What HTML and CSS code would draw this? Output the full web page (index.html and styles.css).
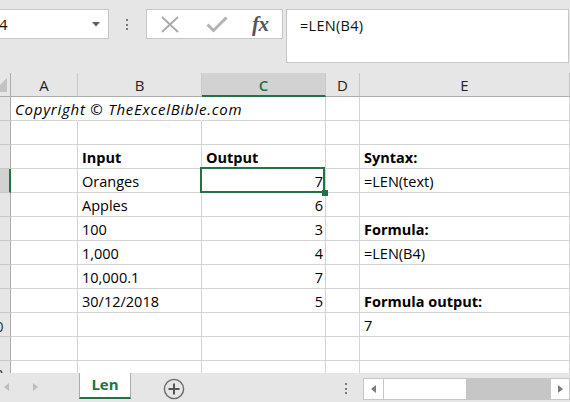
FILE: index.html
```html
<!DOCTYPE html>
<html>
<head>
<meta charset="utf-8">
<link rel="stylesheet" href="styles.css">
</head>
<body>
<div class="app">
  <div class="toolbar">
    <div class="namebox">
      <span class="nb-text">4</span>
      <svg class="nb-arrow" width="8" height="5" viewBox="0 0 8 5"><polygon points="0,0 8,0 4,4.5" fill="#5f5f5f"/></svg>
    </div>
    <div class="vdots"><i></i><i></i><i></i></div>
    <div class="fxbox">
      <svg class="ic-x" width="18" height="17" viewBox="0 0 18 17"><path d="M1 1 L17 16 M17 1 L1 16" stroke="#a8a8a8" stroke-width="1.8" fill="none"/></svg>
      <svg class="ic-check" width="22" height="17" viewBox="0 0 22 17"><path d="M1.5 8.5 L7.5 14.5 L20.5 1.5" stroke="#b3b3b3" stroke-width="3" fill="none"/></svg>
      <span class="fx">fx</span>
    </div>
    <div class="formula">=LEN(B4)</div>
  </div>

  <div class="grid">
    <div class="corner"><svg width="10" height="23" viewBox="0 0 10 23"><polygon points="7,5 7,19 -7,19" fill="#c3c3c3"/></svg></div>
    <div class="ch">A</div>
    <div class="ch">B</div>
    <div class="ch ch-sel">C</div>
    <div class="ch">D</div>
    <div class="ch">E</div>

    <div class="rh"></div>
    <div class="c nob it">Copyright © TheExcelBible.com</div>
    <div class="c nob"></div>
    <div class="c"></div>
    <div class="c"></div>
    <div class="c"></div>

    <div class="rh"></div>
    <div class="c"></div><div class="c"></div><div class="c"></div><div class="c"></div><div class="c"></div>

    <div class="rh"></div>
    <div class="c"></div>
    <div class="c b">Input</div>
    <div class="c b">Output</div>
    <div class="c"></div>
    <div class="c b">Syntax:</div>

    <div class="rh rh-sel"></div>
    <div class="c"></div>
    <div class="c">Oranges</div>
    <div class="c num active">7<div class="selbox"></div><div class="handle"></div></div>
    <div class="c"></div>
    <div class="c">=LEN(text)</div>

    <div class="rh"></div>
    <div class="c"></div>
    <div class="c">Apples</div>
    <div class="c num">6</div>
    <div class="c"></div>
    <div class="c"></div>

    <div class="rh"></div>
    <div class="c"></div>
    <div class="c">100</div>
    <div class="c num">3</div>
    <div class="c"></div>
    <div class="c b">Formula:</div>

    <div class="rh"></div>
    <div class="c"></div>
    <div class="c">1,000</div>
    <div class="c num">4</div>
    <div class="c"></div>
    <div class="c">=LEN(B4)</div>

    <div class="rh"></div>
    <div class="c"></div>
    <div class="c">10,000.1</div>
    <div class="c num">7</div>
    <div class="c"></div>
    <div class="c"></div>

    <div class="rh"></div>
    <div class="c"></div>
    <div class="c">30/12/2018</div>
    <div class="c num">5</div>
    <div class="c"></div>
    <div class="c b">Formula output:</div>

    <div class="rh"><span>10</span></div>
    <div class="c"></div><div class="c"></div><div class="c"></div><div class="c"></div>
    <div class="c">7</div>

    <div class="rh"></div>
    <div class="c"></div><div class="c"></div><div class="c"></div><div class="c"></div><div class="c"></div>

    <div class="rh last"><span>12</span></div>
    <div class="c last"></div><div class="c last"></div><div class="c last"></div><div class="c last"></div><div class="c last"></div>
  </div>

  <div class="tabbar">
    <div class="tabnav">
      <svg class="nav-l" width="5" height="8" viewBox="0 0 5 8"><polygon points="5,0 5,8 0,4" fill="#bdbdbd"/></svg>
      <svg class="nav-r" width="5" height="8" viewBox="0 0 5 8"><polygon points="0,0 0,8 5,4" fill="#bdbdbd"/></svg>
    </div>
    <div class="tab">Len</div>
    <svg class="addsheet" width="22" height="22" viewBox="0 0 22 22"><circle cx="11" cy="11" r="9.6" stroke="#6a6a6a" stroke-width="1.4" fill="none"/><path d="M11 5.5 V16.5 M5.5 11 H16.5" stroke="#555" stroke-width="2" fill="none"/></svg>
    <div class="spacer"></div>
    <div class="vdots vdots2"><i></i><i></i><i></i></div>
    <div class="sb">
      <div class="sb-btn"><svg width="5" height="8" viewBox="0 0 5 8"><polygon points="5,0 5,8 0,4" fill="#7c7c7c"/></svg></div>
      <div class="sb-thumb"></div>
      <div class="sb-track"></div>
      <div class="sb-btn sb-right"><svg width="5" height="8" viewBox="0 0 5 8"><polygon points="0,0 0,8 5,4" fill="#7c7c7c"/></svg></div>
    </div>
  </div>
</div>
</body>
</html>
```
FILE: styles.css
```css
* { box-sizing: border-box; }
html, body { margin: 0; padding: 0; }
body {
  width: 570px;
  height: 402px;
  overflow: hidden;
  background: #e6e6e6;
  font-family: "Open Sans", "Liberation Sans", sans-serif;
  color: #000;
}
.app { display: flex; flex-direction: column; width: 570px; height: 402px; }

/* toolbar */
.toolbar {
  height: 73px;
  flex: 0 0 73px;
  padding-top: 9px;
  display: flex;
  align-items: flex-start;
}
.namebox {
  width: 109px;
  height: 30px;
  background: #fff;
  border: 1px solid #c6c6c6;
  border-left: none;
  display: flex;
  align-items: center;
  justify-content: space-between;
  padding-right: 8px;
}
.nb-text { font-size: 15px; margin-left: -1px; color: #111; }
.nb-arrow { display: block; }
.vdots {
  margin-left: 17px;
  margin-top: 10px;
  display: flex;
  flex-direction: column;
  gap: 2.5px;
}
.vdots i { display: block; width: 2px; height: 2px; background: #7a7a7a; }
.fxbox {
  margin-left: 18px;
  width: 137px;
  height: 30px;
  background: #fff;
  border: 1px solid #c6c6c6;
  display: flex;
  align-items: center;
  padding-left: 14px;
}
.ic-x { display: block; margin-top: 1px; }
.ic-check { display: block; margin-left: 27px; }
.fx {
  margin-left: 24px;
  font-family: "Liberation Serif", "DejaVu Serif", serif;
  font-style: italic;
  font-weight: bold;
  font-size: 21px;
  color: #555;
  letter-spacing: -0.5px;
  line-height: 1;
}
.formula {
  margin-left: 3px;
  width: 283px;
  height: 54px;
  background: #fff;
  border: 1px solid #c6c6c6;
  padding: 6px 0 0 13px;
  font-size: 14.5px;
  line-height: 20px;
  color: #111;
  letter-spacing: 0.3px;
}

/* grid */
.grid {
  display: grid;
  grid-template-columns: 11px 67px 124px 124px 34px 210px;
  grid-template-rows: 24px repeat(11, 24px) 12px;
  background: #fff;
  flex: 0 0 300px;
}
.corner {
  background: #e6e6e6;
  border-right: 1px solid #ababab;
  border-bottom: 1px solid #ababab;
  overflow: hidden;
}
.corner svg { display: block; }
.ch {
  background: #e6e6e6;
  border-right: 1px solid #c8c8c8;
  border-bottom: 1px solid #ababab;
  text-align: center;
  font-size: 15px;
  line-height: 20px;
  padding-top: 2px;
  color: #222;
}
.ch-sel {
  background: #d2d2d2;
  color: #217346;
  border-bottom: 2px solid #217346;
  font-weight: 600;
}
.rh {
  background: #e6e6e6;
  border-right: 1px solid #ababab;
  border-bottom: 1px solid #c8c8c8;
  overflow: hidden;
  display: flex;
  align-items: flex-end;
}
.rh span {
  flex: 0 0 30px;
  margin-left: -20px;
  text-align: center;
  font-size: 15px;
  line-height: 20px;
  color: #333;
}
.rh-sel { background: #d2d2d2; border-right: 2px solid #217346; }
.rh.last, .c.last { border-bottom: none; }
.rh.last { align-items: flex-start; }
.rh.last span { padding-top: 3px; }

.c {
  position: relative;
  border-right: 1px solid #d4d4d4;
  border-bottom: 1px solid #d4d4d4;
  display: flex;
  align-items: flex-end;
  padding: 0 3px 1px 4px;
  font-size: 14.5px;
  line-height: 19px;
  white-space: nowrap;
  color: #000;
}
.c.nob { border-right-color: transparent; }
.c.it { font-style: italic; font-size: 15px; letter-spacing: 0.75px; }
.c.b { font-weight: bold; }
.c.num { justify-content: flex-end; padding-right: 2px; }
.selbox {
  position: absolute;
  left: -2px;
  top: -2px;
  right: 0;
  bottom: -1px;
  border: 2px solid #217346;
}
.handle {
  position: absolute;
  left: 120px;
  top: 21px;
  width: 6px;
  height: 6px;
  background: #217346;
  z-index: 2;
}

/* tab bar */
.tabbar {
  flex: 0 0 29px;
  height: 29px;
  display: flex;
  align-items: flex-start;
  background: #e6e6e6;
}
.tabnav {
  width: 79px;
  height: 29px;
  display: flex;
  align-items: center;
  padding-left: 4px;
  padding-bottom: 2px;
}
.nav-r { margin-left: 24px; }
.tab {
  width: 52px;
  height: 26px;
  background: #fff;
  border-left: 1px solid #ababab;
  border-right: 1px solid #ababab;
  border-bottom: 2px solid #217346;
  text-align: center;
  font-weight: bold;
  font-size: 15px;
  line-height: 22px;
  color: #217346;
}
.addsheet { display: block; margin-left: 32px; margin-top: 5px; }
.spacer { flex: 1; }
.vdots2 { margin-left: 0; margin-top: 10px; margin-right: 16px; }
.sb {
  width: 207px;
  height: 22px;
  margin-top: 5px;
  display: flex;
  border: 1px solid #c6c6c6;
  background: #c6c6c6;
}
.sb-btn {
  width: 19px;
  background: #fff;
  display: flex;
  align-items: center;
  justify-content: center;
}
.sb-btn svg { display: block; }
.sb-thumb {
  width: 84px;
  background: #fff;
  border-left: 1px solid #c6c6c6;
  border-right: 1px solid #c6c6c6;
}
.sb-track { flex: 1; }
.sb-right { border-left: 1px solid #c6c6c6; }
```
